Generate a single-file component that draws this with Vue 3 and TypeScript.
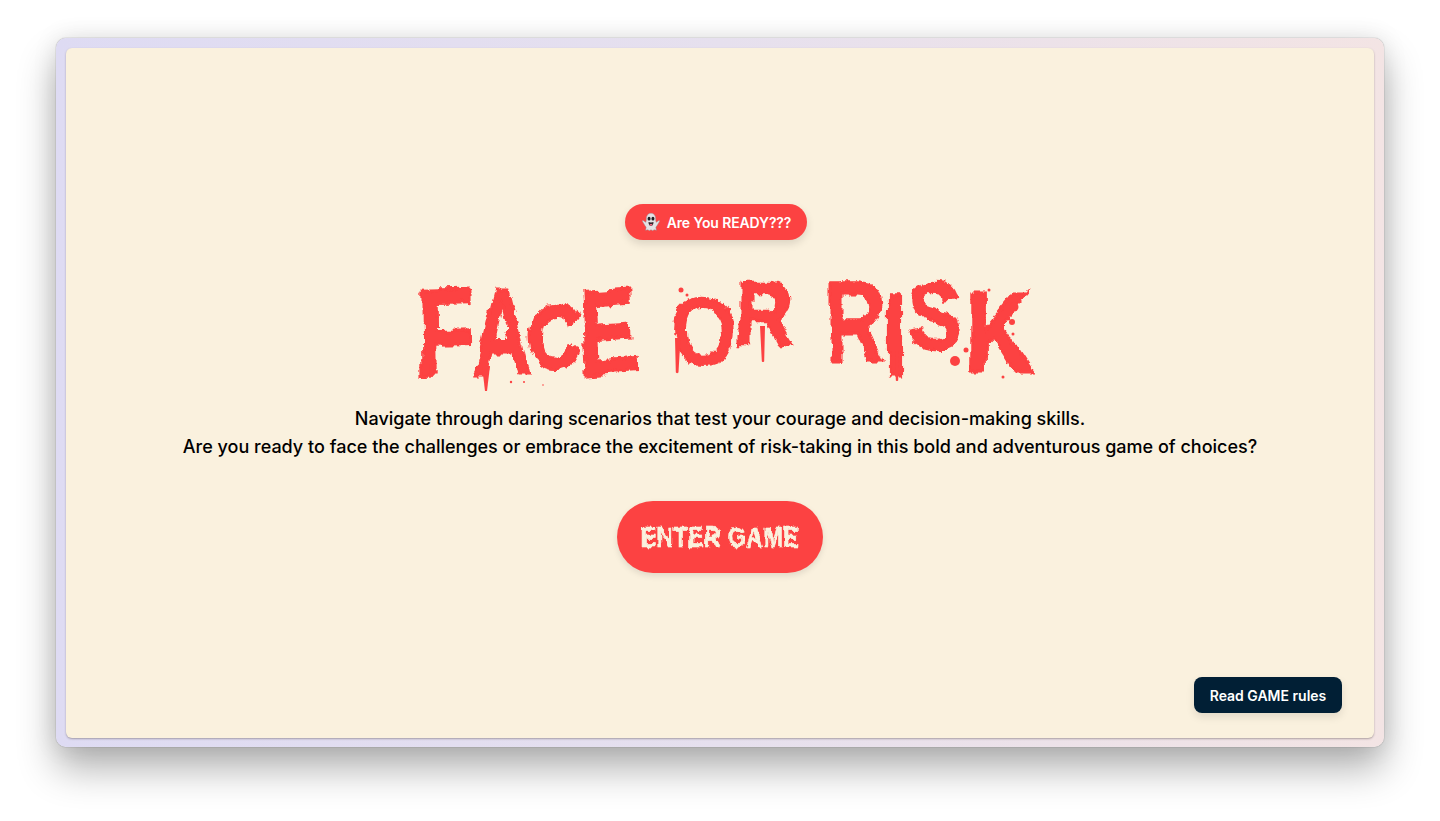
<script setup lang="ts">
const lines: string[] = [
  'Navigate through daring scenarios that test your courage and decision-making skills.',
  'Are you ready to face the challenges or embrace the excitement of risk-taking in this bold and adventurous game of choices?',
]
const words: { text: string; cls: string }[][] = [
  [
    { text: 'F', cls: 'f' },
    { text: 'A', cls: 'a' },
    { text: 'C', cls: 'c' },
    { text: 'E', cls: 'e' },
  ],
  [
    { text: 'O', cls: 'o' },
    { text: 'R', cls: 'r1' },
  ],
  [
    { text: 'R', cls: 'r2' },
    { text: 'I', cls: 'i' },
    { text: 'S', cls: 's' },
    { text: 'K', cls: 'k' },
  ],
]
</script>

<template>
  <div class="page">
    <svg class="defs" width="0" height="0" aria-hidden="true">
      <filter id="grunge" x="-10%" y="-10%" width="120%" height="120%">
        <feTurbulence type="fractalNoise" baseFrequency="0.03 0.018" numOctaves="2" seed="7" result="big" />
        <feDisplacementMap in="SourceGraphic" in2="big" scale="13" xChannelSelector="R" yChannelSelector="G" result="wob" />
        <feTurbulence type="fractalNoise" baseFrequency="0.16 0.09" numOctaves="3" seed="3" result="fine" />
        <feDisplacementMap in="wob" in2="fine" scale="6" xChannelSelector="G" yChannelSelector="R" />
      </filter>
      <filter id="grunge-small" x="-10%" y="-10%" width="120%" height="120%">
        <feTurbulence type="fractalNoise" baseFrequency="0.14 0.08" numOctaves="3" seed="5" result="fine" />
        <feDisplacementMap in="SourceGraphic" in2="fine" scale="6" xChannelSelector="R" yChannelSelector="G" />
      </filter>
    </svg>

    <main class="frame">
      <section class="panel">
        <div class="badge">
          <svg class="ghost" viewBox="0 0 24 24" aria-hidden="true">
            <path d="M12 1.500c-3.800 0-5.600 3-5.600 6.900 0 1.700-.2 3-.7 4L2.600 10.300c-.7-.4-1.200.4-.8 1.100l3.300 5.500c.4.600.8 1 1.100 1.200L5.600 22l2.900-.8 1.300 1.300 2.200-1.200 2.200 1.200 1.300-1.300 2.900.8-.6-3.900c.3-.2.700-.6 1.100-1.200l3.300-5.500c.4-.7-.1-1.500-.8-1.100l-3.100 2.100c-.5-1-.7-2.300-.7-4 0-3.900-1.800-6.900-5.600-6.900z" fill="#e4e2e4" stroke="#8f8d92" stroke-width=".5" />
            <ellipse cx="9.700" cy="8" rx="1.800" ry="2.200" fill="#1f2024" />
            <ellipse cx="14.300" cy="8" rx="1.800" ry="2.200" fill="#1f2024" />
            <path d="M9 12c1.800.8 4.200.8 6 0 .1 2.800-1.200 4.800-3 4.800S8.900 14.800 9 12z" fill="#35252c" />
            <path d="M10.300 14.800c.9-.6 2.500-.6 3.400 0-.3 1.200-1 2-1.700 2s-1.400-.8-1.700-2z" fill="#ef6a83" />
          </svg>
          <span class="badge-text">Are You READY???</span>
        </div>

        <div class="title-wrap">
          <h1 class="title">
            <span v-for="(word, w) in words" :key="w" class="word">
              <span v-for="l in word" :key="l.cls" class="letter" :class="l.cls">{{ l.text }}</span>
            </span>
          </h1>
          <svg class="splatter" viewBox="0 0 640 120" aria-hidden="true">
            <g fill="#fc4242">
              <circle cx="279" cy="14" r="2.500" />
              <circle cx="285" cy="19" r="1.500" />
              <circle cx="612" cy="31" r="4.500" />
              <circle cx="610" cy="46" r="3" />
              <circle cx="619" cy="21" r="2" />
              <circle cx="587" cy="14" r="1.500" />
              <circle cx="553" cy="85" r="5" />
              <circle cx="564" cy="74" r="2.500" />
              <circle cx="601" cy="101" r="1.500" />
              <circle cx="611" cy="58" r="1.500" />
              <circle cx="109" cy="106" r="1.200" />
              <circle cx="122" cy="106" r="1" />
              <circle cx="141" cy="109" r=".8" />
              <path d="M273 62h5.500l-2 34c0 1.500-2.700 1.500-2.700 0z" />
              <path d="M358 50h5l-.8 35c0 1.400-2.400 1.400-2.400 0z" />
              <path d="M493 74h4l-.8 30c0 1.300-2.400 1.300-2.400 0z" />
              <path d="M80 90h8l-3 25h-2z" />
              <path d="M27 88h5l-1 12c0 1-2.600 1-2.800 0z" />
            </g>
          </svg>
        </div>

        <p class="intro">
          <span v-for="line in lines" :key="line" class="intro-line">{{ line }}</span>
        </p>

        <button class="enter" type="button"><span class="enter-label">ENTER GAME</span></button>

        <button class="rules" type="button">Read GAME rules</button>
      </section>
    </main>
  </div>
</template>

<style>
html,
body {
  margin: 0;
  background: #ffffff;
}
</style>

<style scoped>
.page {
  box-sizing: border-box;
  width: 1440px;
  height: 821px;
  padding: 38px 56px 74px;
  overflow: hidden;
  background: #ffffff;
  font-family: Inter, "Liberation Sans", sans-serif;
}

.defs {
  position: absolute;
}

.frame {
  box-sizing: border-box;
  height: 709px;
  padding: 10px;
  border-radius: 10px;
  background: linear-gradient(90deg, #dedbf3 0%, #e6e0ee 50%, #f3e4e4 100%);
  box-shadow: 0 0 1px rgba(60, 60, 60, 0.8), 0 22px 38px rgba(0, 0, 0, 0.3), 0 0 24px rgba(0, 0, 0, 0.1);
}

.panel {
  box-sizing: border-box;
  display: flex;
  flex-direction: column;
  align-items: center;
  height: 690px;
  padding: 156px 32px 25px;
  border-radius: 6px;
  background: #faf1de;
  box-shadow: 0 1px 2px rgba(70, 60, 60, 0.4);
}

.badge {
  display: flex;
  align-items: center;
  gap: 6px;
  box-sizing: border-box;
  height: 36px;
  padding: 0 16px;
  margin-left: -8px;
  border-radius: 18px;
  background: #fc4242;
  color: #ffffff;
  font-size: 14px;
  font-weight: 600;
  box-shadow: 0 4px 8px rgba(0, 0, 0, 0.12);
}

.badge-text {
  letter-spacing: -0.12px;
}

.ghost {
  width: 20px;
  height: 20px;
}

.title-wrap {
  position: relative;
  width: 640px;
  height: 120px;
  margin-top: 36px;
  margin-left: 4px;
}

.title {
  display: flex;
  margin: 0;
  color: #fc4242;
  font-family: "Liberation Sans", Arial, sans-serif;
  font-size: 120px;
  font-weight: 700;
  line-height: 120px;
  -webkit-text-stroke: 3px #fc4242;
  filter: url(#grunge);
}

.word {
  display: flex;
}

.letter {
  display: flex;
  justify-content: center;
  transform-origin: center;
}

.f { width: 58px; margin-left: 15px; transform: translateY(-4px) scale(0.8, 1.02) rotate(-1deg); }
.a { width: 55px; transform: translateY(-4px) scale(0.69, 1.03); }
.c { width: 48px; transform: translateY(0) scale(0.61, 0.74); }
.e { width: 58px; transform: translateY(-4px) scale(0.75, 0.99) rotate(-3deg); }
.o { width: 63px; margin-left: 36px; transform: translateY(-5px) scale(0.68, 0.74); }
.r1 { width: 60px; transform: translateY(-22px) scale(0.69, 0.76); }
.r2 { width: 60px; margin-left: 30px; transform: translateY(-15px) scale(0.69, 0.93); }
.i { width: 20px; transform: translateY(1px) scale(0.6, 0.96); }
.s { width: 60px; transform: translateY(-20px) scale(0.75, 0.77); }
.k { width: 67px; transform: translateY(-4px) scale(0.77, 0.95); }

.splatter {
  position: absolute;
  inset: 0;
  width: 640px;
  height: 120px;
  pointer-events: none;
}

.intro {
  margin: 9px 0 0;
  color: #000000;
  font-size: 18px;
  font-weight: 500;
  line-height: 28px;
  text-align: center;
  white-space: nowrap;
}

.intro-line {
  display: block;
}

.enter {
  display: flex;
  align-items: center;
  justify-content: center;
  width: 206px;
  height: 72px;
  margin-top: 40px;
  padding: 0;
  border: 0;
  border-radius: 36px;
  background: #fc4242;
  box-shadow: 0 3px 6px rgba(0, 0, 0, 0.1);
}

.enter-label {
  color: #faf1de;
  font-family: "Liberation Sans", Arial, sans-serif;
  font-size: 29px;
  font-weight: 700;
  -webkit-text-stroke: 0.7px #faf1de;
  transform: scaleX(0.82);
  white-space: nowrap;
  filter: url(#grunge-small);
}

.rules {
  align-self: flex-end;
  width: 148px;
  height: 36px;
  margin-top: auto;
  padding: 0;
  border: 0;
  border-radius: 8px;
  background: #011f35;
  color: #ffffff;
  font-family: Inter, "Liberation Sans", sans-serif;
  font-size: 14px;
  font-weight: 600;
  box-shadow: 0 4px 8px rgba(0, 0, 0, 0.1);
}
</style>
